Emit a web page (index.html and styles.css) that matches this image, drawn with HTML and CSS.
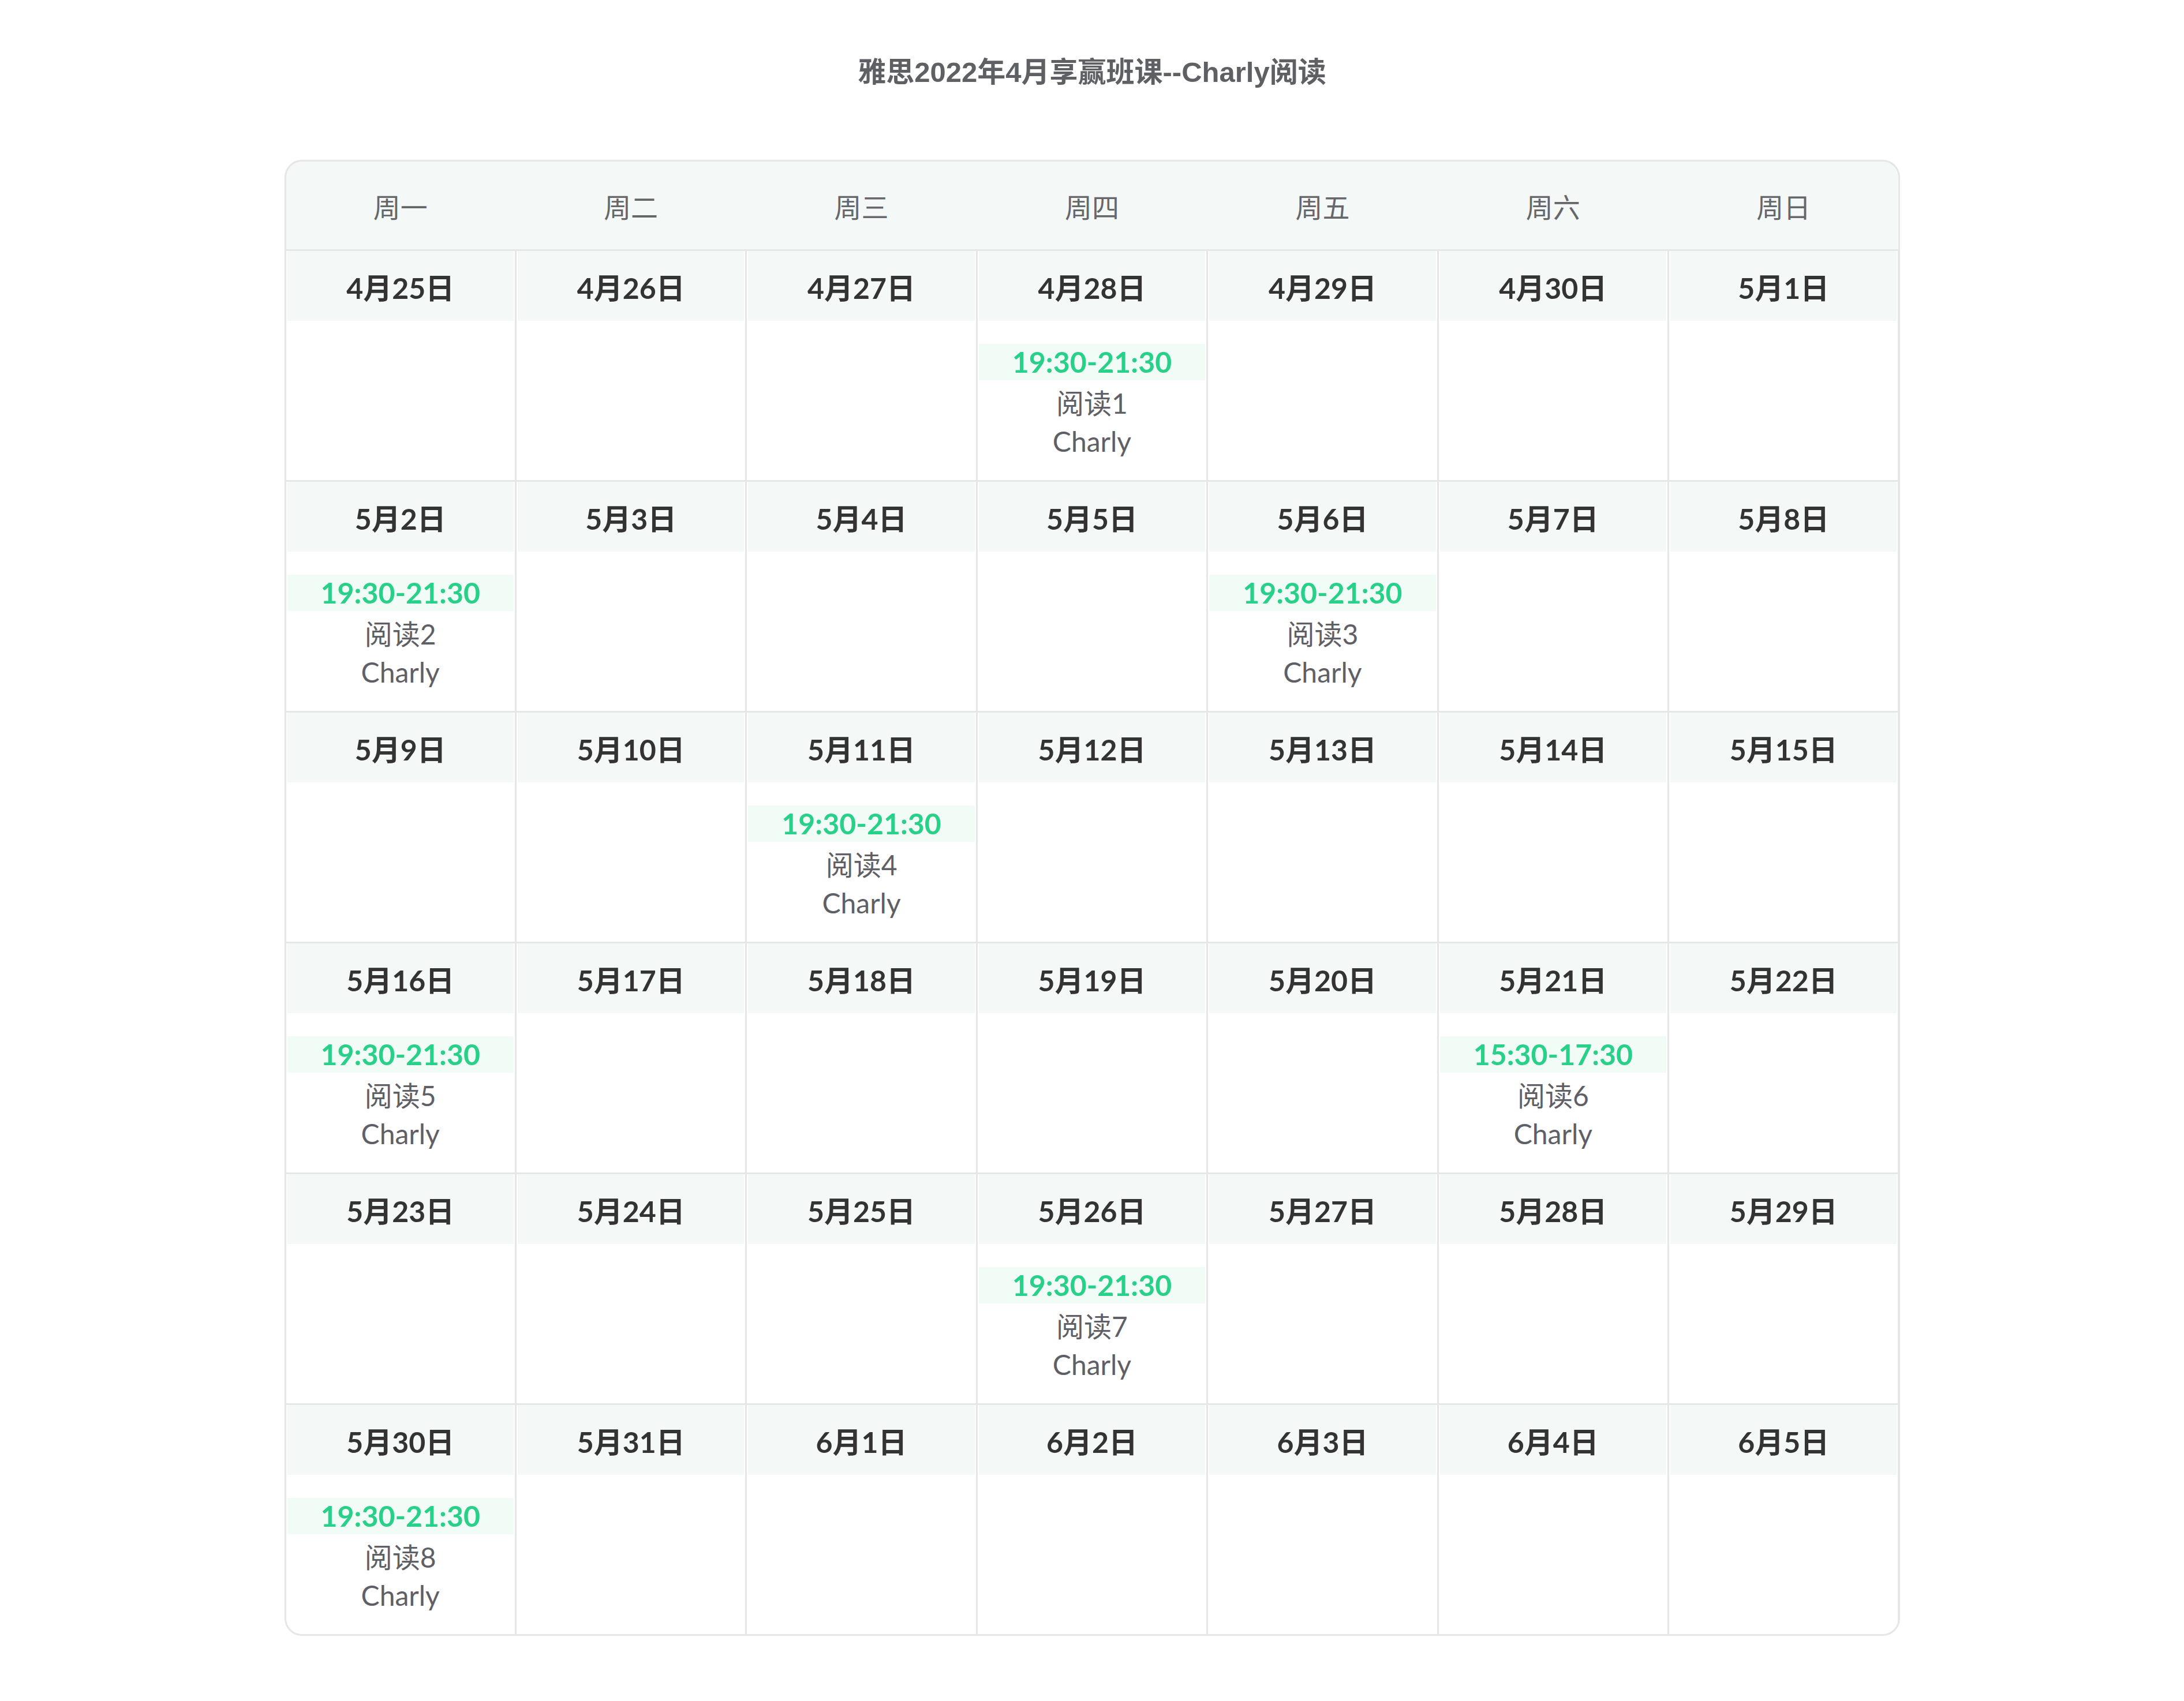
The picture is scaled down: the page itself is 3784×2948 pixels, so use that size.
FILE: index.html
```html
<!DOCTYPE html>
<html lang="zh-CN">
<head>
<meta charset="utf-8">
<title>雅思2022年4月享赢班课--Charly阅读</title>
<link rel="stylesheet" href="styles.css">
</head>
<body>
<div class="page">
  <h1 class="title">雅思2022年4月享赢班课--Charly阅读</h1>
  <div class="calendar">
    <div class="weekdays">
      <div class="wd">周一</div><div class="wd">周二</div><div class="wd">周三</div><div class="wd">周四</div><div class="wd">周五</div><div class="wd">周六</div><div class="wd">周日</div>
    </div>
    <div class="days">
      <div class="cell"><div class="date">4月25日</div></div>
      <div class="cell"><div class="date">4月26日</div></div>
      <div class="cell"><div class="date">4月27日</div></div>
      <div class="cell"><div class="date">4月28日</div><div class="event"><div class="time">19:30-21:30</div><div class="line">阅读1</div><div class="line">Charly</div></div></div>
      <div class="cell"><div class="date">4月29日</div></div>
      <div class="cell"><div class="date">4月30日</div></div>
      <div class="cell"><div class="date">5月1日</div></div>

      <div class="cell"><div class="date">5月2日</div><div class="event"><div class="time">19:30-21:30</div><div class="line">阅读2</div><div class="line">Charly</div></div></div>
      <div class="cell"><div class="date">5月3日</div></div>
      <div class="cell"><div class="date">5月4日</div></div>
      <div class="cell"><div class="date">5月5日</div></div>
      <div class="cell"><div class="date">5月6日</div><div class="event"><div class="time">19:30-21:30</div><div class="line">阅读3</div><div class="line">Charly</div></div></div>
      <div class="cell"><div class="date">5月7日</div></div>
      <div class="cell"><div class="date">5月8日</div></div>

      <div class="cell"><div class="date">5月9日</div></div>
      <div class="cell"><div class="date">5月10日</div></div>
      <div class="cell"><div class="date">5月11日</div><div class="event"><div class="time">19:30-21:30</div><div class="line">阅读4</div><div class="line">Charly</div></div></div>
      <div class="cell"><div class="date">5月12日</div></div>
      <div class="cell"><div class="date">5月13日</div></div>
      <div class="cell"><div class="date">5月14日</div></div>
      <div class="cell"><div class="date">5月15日</div></div>

      <div class="cell"><div class="date">5月16日</div><div class="event"><div class="time">19:30-21:30</div><div class="line">阅读5</div><div class="line">Charly</div></div></div>
      <div class="cell"><div class="date">5月17日</div></div>
      <div class="cell"><div class="date">5月18日</div></div>
      <div class="cell"><div class="date">5月19日</div></div>
      <div class="cell"><div class="date">5月20日</div></div>
      <div class="cell"><div class="date">5月21日</div><div class="event"><div class="time">15:30-17:30</div><div class="line">阅读6</div><div class="line">Charly</div></div></div>
      <div class="cell"><div class="date">5月22日</div></div>

      <div class="cell"><div class="date">5月23日</div></div>
      <div class="cell"><div class="date">5月24日</div></div>
      <div class="cell"><div class="date">5月25日</div></div>
      <div class="cell"><div class="date">5月26日</div><div class="event"><div class="time">19:30-21:30</div><div class="line">阅读7</div><div class="line">Charly</div></div></div>
      <div class="cell"><div class="date">5月27日</div></div>
      <div class="cell"><div class="date">5月28日</div></div>
      <div class="cell"><div class="date">5月29日</div></div>

      <div class="cell"><div class="date">5月30日</div><div class="event"><div class="time">19:30-21:30</div><div class="line">阅读8</div><div class="line">Charly</div></div></div>
      <div class="cell"><div class="date">5月31日</div></div>
      <div class="cell"><div class="date">6月1日</div></div>
      <div class="cell"><div class="date">6月2日</div></div>
      <div class="cell"><div class="date">6月3日</div></div>
      <div class="cell"><div class="date">6月4日</div></div>
      <div class="cell"><div class="date">6月5日</div></div>
    </div>
  </div>
</div>
</body>
</html>
```

FILE: styles.css
```css
html, body {
  margin: 0;
  padding: 0;
  background: #ffffff;
}

.page {
  padding-top: 90px;
  padding-bottom: 100px;
  font-family: "Lato", "Noto Sans CJK SC", sans-serif;
}

.title {
  margin: 0;
  text-align: center;
  font-family: "Liberation Sans", "Noto Sans CJK SC", sans-serif;
  font-weight: 700;
  font-size: 49px;
  line-height: 70px;
  color: #5f6064;
}

.calendar {
  width: 2799px;
  box-sizing: border-box;
  margin: 117px auto 0;
  border: 3px solid #e6e6e6;
  border-radius: 30px;
  overflow: hidden;
  background: #e6e6e6;
}

.weekdays {
  display: grid;
  grid-template-columns: repeat(7, 1fr);
  column-gap: 3px;
  height: 152px;
  background: #f4f8f7;
  border-bottom: 3px solid #e6e6e6;
}

.wd {
  display: flex;
  align-items: center;
  justify-content: center;
  font-family: "Noto Sans CJK SC", sans-serif;
  font-size: 47px;
  color: #66676b;
}

.days {
  display: grid;
  grid-template-columns: repeat(7, 1fr);
  grid-auto-rows: 397px;
  gap: 3px;
}

.cell {
  background: #ffffff;
  display: flex;
  flex-direction: column;
  padding: 0 2px;
}

.date {
  height: 121px;
  display: flex;
  align-items: center;
  justify-content: center;
  background: #f4f8f7;
  font-weight: 700;
  font-size: 50px;
  color: #333333;
}

.event {
  margin-top: 40px;
  text-align: center;
}

.time {
  height: 63px;
  line-height: 63px;
  margin-bottom: 7px;
  background: #f2fcf7;
  color: #28d08a;
  font-weight: 700;
  font-size: 50px;
}

.line {
  line-height: 66px;
  font-size: 48px;
  color: #5f6066;
}
```
